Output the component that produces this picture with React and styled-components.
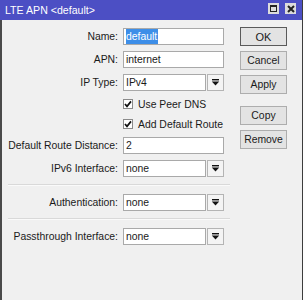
import styled, { createGlobalStyle } from 'styled-components';

const GlobalStyle = createGlobalStyle`
  html, body {
    margin: 0;
    padding: 0;
    background: #fdfdfd;
  }
  body {
    font-family: 'Liberation Sans', Arial, sans-serif;
  }
`;

function DropArrow() {
  return (
    <svg width="9" height="9" viewBox="0 0 9 9">
      <rect x="1" y="1" width="7" height="1.4" fill="#111" />
      <polygon points="0.8,3.4 8.2,3.4 4.5,7.6" fill="#111" />
    </svg>
  );
}

function Check() {
  return (
    <svg width="8" height="8" viewBox="0 0 8 8">
      <polyline points="1,4 3,6.4 7,1.4" fill="none" stroke="#111" strokeWidth="1.7" />
    </svg>
  );
}

function App() {
  return (
    <>
      <GlobalStyle />
      <Window>
        <TitleBar>
          <Title>LTE APN &lt;default&gt;</Title>
          <TitleIcons>
            <TitleIcon>
              <MaxSquare />
            </TitleIcon>
            <TitleIcon>
              <svg width="8" height="8" viewBox="0 0 8 8">
                <path d="M1 1 L7 7 M7 1 L1 7" stroke="#222" strokeWidth="2" />
              </svg>
            </TitleIcon>
          </TitleIcons>
        </TitleBar>
        <Body>
          <Form>
            <Row>
              <Label>Name:</Label>
              <Field>
                <Selected>default</Selected>
              </Field>
            </Row>
            <Row>
              <Label>APN:</Label>
              <Field>internet</Field>
            </Row>
            <Row>
              <Label>IP Type:</Label>
              <Combo>
                <Field>IPv4</Field>
                <DropButton>
                  <DropArrow />
                </DropButton>
              </Combo>
            </Row>
            <CheckRow>
              <span />
              <CheckLabel>
                <CheckBox>
                  <Check />
                </CheckBox>
                Use Peer DNS
              </CheckLabel>
            </CheckRow>
            <CheckRow>
              <span />
              <CheckLabel>
                <CheckBox>
                  <Check />
                </CheckBox>
                Add Default Route
              </CheckLabel>
            </CheckRow>
            <Row>
              <Label>Default Route Distance:</Label>
              <Field>2</Field>
            </Row>
            <Row>
              <Label>IPv6 Interface:</Label>
              <Combo>
                <Field>none</Field>
                <DropButton>
                  <DropArrow />
                </DropButton>
              </Combo>
            </Row>
            <Separator />
            <Row>
              <Label>Authentication:</Label>
              <Combo>
                <Field>none</Field>
                <DropButton>
                  <DropArrow />
                </DropButton>
              </Combo>
            </Row>
            <Separator />
            <Row>
              <Label>Passthrough Interface:</Label>
              <Combo>
                <Field>none</Field>
                <DropButton>
                  <DropArrow />
                </DropButton>
              </Combo>
            </Row>
          </Form>
          <Buttons>
            <Button $primary>OK</Button>
            <Button>Cancel</Button>
            <Button>Apply</Button>
            <ButtonGroup>
              <Button>Copy</Button>
              <Button>Remove</Button>
            </ButtonGroup>
          </Buttons>
        </Body>
      </Window>
    </>
  );
}

const Window = styled.div`
  width: 303px;
  height: 300px;
  display: flex;
  flex-direction: column;
  background: #f0f0f0;
  color: #1a1a1a;
  font-size: 10.4px;
  box-sizing: border-box;
  border-right: 1px solid #3c3c3c;
`;

const TitleBar = styled.div`
  height: 19px;
  flex: none;
  display: flex;
  align-items: center;
  justify-content: space-between;
  padding: 0 6px 1px 5px;
  background: #4c4fc4;
  color: #fff;
`;

const Title = styled.div`
  font-size: 10.6px;
`;

const TitleIcons = styled.div`
  display: flex;
  gap: 6px;
  margin-top: -2px;
`;

const TitleIcon = styled.div`
  width: 11px;
  height: 11px;
  display: flex;
  align-items: center;
  justify-content: center;
  background: #dcdcdc;
`;

const MaxSquare = styled.div`
  width: 7px;
  height: 7px;
  box-sizing: border-box;
  border: 1.5px solid #222;
  border-top-width: 2px;
`;

const Body = styled.div`
  flex: 1;
  display: flex;
  border-left: 2px solid #4a4a4a;
`;

const Form = styled.div`
  width: 222px;
  display: flex;
  flex-direction: column;
  gap: 6px;
  padding: 8px 0 0 6px;
`;

const Row = styled.div`
  display: grid;
  grid-template-columns: 110px 101px;
  column-gap: 5px;
  align-items: center;
  height: 17px;
`;

const CheckRow = styled(Row)`
  height: 14px;
`;

const Label = styled.div`
  text-align: right;
  white-space: nowrap;
`;

const Field = styled.div`
  flex: 1;
  height: 17px;
  box-sizing: border-box;
  border: 1px solid #a9a9a9;
  background: #fff;
  padding: 0 0 0 2px;
  display: flex;
  align-items: center;
  white-space: nowrap;
  overflow: hidden;
`;

const Selected = styled.span`
  background: #3d8ee8;
  color: #fff;
  height: 15px;
  line-height: 15px;
  padding-right: 1px;
`;

const Combo = styled.div`
  display: flex;
  gap: 1px;
`;

const DropButton = styled.div`
  width: 17px;
  height: 17px;
  flex: none;
  box-sizing: border-box;
  border: 1px solid #b4b4b4;
  background: #f4f4f4;
  display: flex;
  align-items: center;
  justify-content: center;
`;

const CheckLabel = styled.div`
  display: flex;
  align-items: center;
  gap: 5px;
  white-space: nowrap;
`;

const CheckBox = styled.div`
  width: 10px;
  height: 10px;
  box-sizing: border-box;
  border: 1px solid #8a8a8a;
  background: #fff;
  display: flex;
  align-items: center;
  justify-content: center;
`;

const Separator = styled.div`
  height: 1px;
  margin: 1px 0 3px;
  width: 222px;
  background: #d9d9d9;
  box-shadow: 0 1px 0 #fafafa;
`;

const Buttons = styled.div`
  display: flex;
  flex-direction: column;
  gap: 5px;
  padding: 7px 0 0 10px;
`;

const ButtonGroup = styled.div`
  display: flex;
  flex-direction: column;
  gap: 5px;
  margin-top: 7px;
`;

const Button = styled.div`
  width: 47px;
  height: 19px;
  box-sizing: border-box;
  border: 1px solid ${({ $primary }) => ($primary ? '#5a5a5a' : '#adadad')};
  background: #e3e3e3;
  display: flex;
  align-items: center;
  justify-content: center;
  font-size: ${({ $primary }) => ($primary ? '11px' : '10.4px')};
`;

export default App;
